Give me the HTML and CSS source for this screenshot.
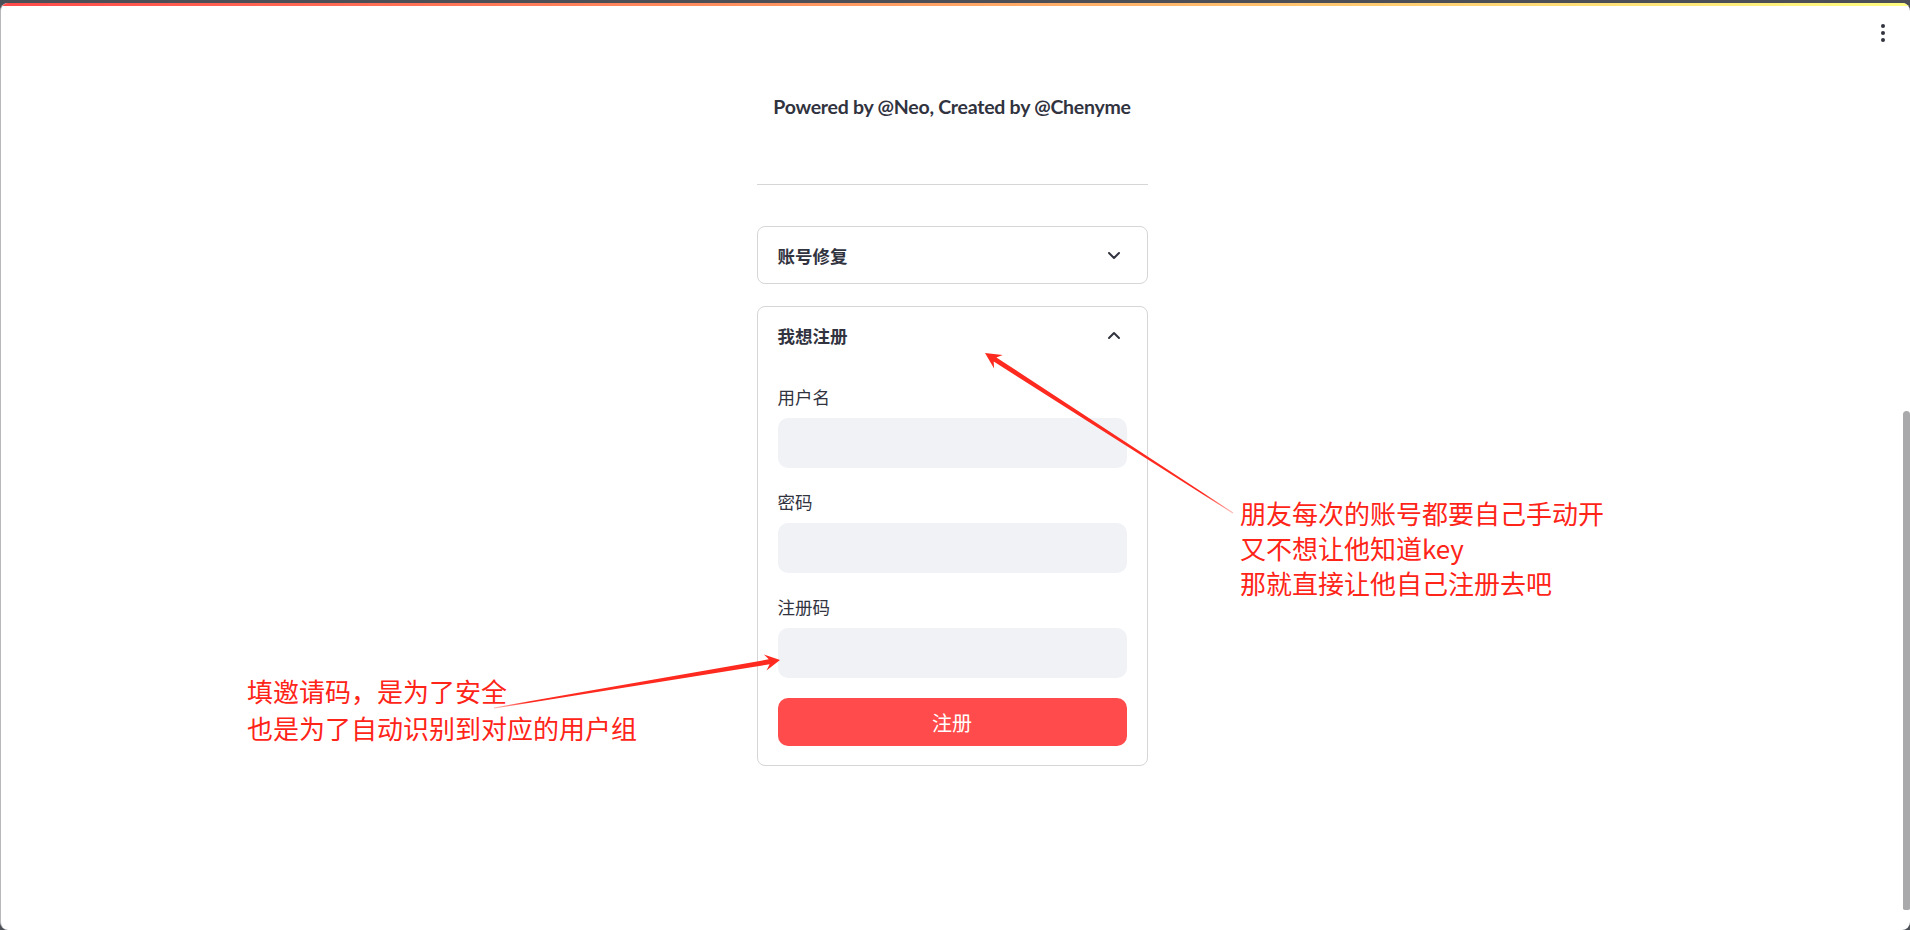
FILE: index.html
```html
<!DOCTYPE html>
<html lang="zh">
<head>
<meta charset="utf-8">
<title>Register</title>
<link rel="stylesheet" href="styles.css">
</head>
<body>
<div class="window">
  <div class="decoration"></div>
  <div class="frame">
    <div class="page">
      <div class="topbar">
        <svg class="kebab" width="4" height="18" viewBox="0 0 4 18"><circle cx="2" cy="2" r="2"/><circle cx="2" cy="9" r="2"/><circle cx="2" cy="16" r="2"/></svg>
      </div>
      <main class="column">
        <p class="powered">Powered by @Neo, Created by @Chenyme</p>
        <hr class="divider">
        <section class="expander">
          <div class="exp-header">
            <span class="exp-title">账号修复</span>
            <svg class="chev" width="14" height="9" viewBox="0 0 14 9"><path d="M2 2 L7 7 L12 2" fill="none" stroke="#31333f" stroke-width="2" stroke-linecap="round" stroke-linejoin="round"/></svg>
          </div>
        </section>
        <section class="expander open">
          <div class="exp-header">
            <span class="exp-title">我想注册</span>
            <svg class="chev" width="14" height="9" viewBox="0 0 14 9"><path d="M2 7 L7 2 L12 7" fill="none" stroke="#31333f" stroke-width="2" stroke-linecap="round" stroke-linejoin="round"/></svg>
          </div>
          <div class="exp-body">
            <label class="field">
              <span class="label">用户名</span>
              <span class="input"></span>
            </label>
            <label class="field">
              <span class="label">密码</span>
              <span class="input"></span>
            </label>
            <label class="field">
              <span class="label">注册码</span>
              <span class="input"></span>
            </label>
            <button class="btn" type="button">注册</button>
          </div>
        </section>
      </main>
    </div>
    <div class="track"><div class="thumb"></div></div>
  </div>

  <div class="note note-right">朋友每次的账号都要自己手动开<br>又不想让他知道key<br>那就直接让他自己注册去吧</div>
  <div class="note note-left">填邀请码，是为了安全<br>也是为了自动识别到对应的用户组</div>
  <svg class="arrows" width="1910" height="930" viewBox="0 0 1910 930">
    <defs>
      <linearGradient id="g1" x1="1233" y1="513" x2="985" y2="353" gradientUnits="userSpaceOnUse">
        <stop offset="0" stop-color="#ff3b30" stop-opacity="0.35"/>
        <stop offset="0.12" stop-color="#ff2a1f"/>
        <stop offset="1" stop-color="#ff2a1f"/>
      </linearGradient>
      <linearGradient id="g2" x1="494" y1="708" x2="780" y2="660" gradientUnits="userSpaceOnUse">
        <stop offset="0" stop-color="#ff3b30" stop-opacity="0.35"/>
        <stop offset="0.12" stop-color="#ff2a1f"/>
        <stop offset="1" stop-color="#ff2a1f"/>
      </linearGradient>
    </defs>
    <polygon fill="url(#g1)" points="1233.3,512.6 996.4,357.4 1002.7,355.0 985,353 994.1,368.4 993.7,361.6 1232.7,513.4"/>
    <polygon fill="url(#g2)" points="493.9,707.5 768.8,659.3 763.9,654.6 780,660 766.5,670.4 769.6,664.3 494.1,708.5"/>
  </svg>
</div>
</body>
</html>
```

FILE: styles.css
```css
html, body {
  margin: 0;
  padding: 0;
  background: #4c4f55;
  width: 1910px;
  height: 930px;
  overflow: hidden;
}

.window {
  position: relative;
  margin-top: 3px;
  height: 927px;
  background: #ffffff;
  border-radius: 8px;
  overflow: hidden;
  display: flex;
  flex-direction: column;
  border-left: 1px solid #b8b8bb;
  box-sizing: border-box;
  font-family: "Lato", "Noto Sans CJK SC", sans-serif;
  color: #31333f;
}

.decoration {
  height: 3px;
  flex: none;
  background: linear-gradient(90deg, #ff4b4b, #fffd80);
}

.frame {
  flex: 1;
  display: flex;
}

.page {
  flex: 1;
  display: flex;
  flex-direction: column;
}

.topbar {
  height: 54px;
  display: flex;
  align-items: center;
  justify-content: flex-end;
  padding-right: 18px;
}

.kebab { fill: #31333f; }

.track {
  width: 7px;
  flex: none;
  display: flex;
  flex-direction: column;
}

.thumb {
  margin-top: 405px;
  height: 499px;
  background: #a9a9ab;
  border-radius: 4px 4px 2px 2px;
}

.column {
  width: 391px;
  margin: 0 auto;
  padding-top: 31px;
}

.powered {
  margin: 0;
  text-align: center;
  font-size: 19.5px;
  line-height: 32px;
  font-weight: 700;
  letter-spacing: -0.25px;
}

.divider {
  margin: 61px 0 41px;
  border: none;
  height: 1px;
  background: #d6d6d9;
}

.expander {
  border: 1px solid #d6d6d9;
  border-radius: 8px;
  margin-bottom: 22px;
}

.exp-header {
  height: 56px;
  display: flex;
  align-items: center;
  justify-content: space-between;
  padding: 0 26px 0 20px;
}

.exp-title {
  font-family: "Noto Sans CJK SC", sans-serif;
  font-weight: 700;
  font-size: 17.5px;
}

.exp-body {
  padding: 20px 20px 19px 20px;
  display: flex;
  flex-direction: column;
}

.field {
  display: flex;
  flex-direction: column;
  margin-bottom: 20px;
}

.label {
  font-family: "Noto Sans CJK SC", sans-serif;
  font-size: 17.5px;
  line-height: 28px;
  margin-bottom: 7px;
}

.input {
  height: 50px;
  background: #f0f2f6;
  border-radius: 10px;
}

.btn {
  height: 48px;
  border: none;
  border-radius: 10px;
  background: #ff4b4b;
  color: #ffffff;
  font-family: "Noto Sans CJK SC", sans-serif;
  font-size: 20px;
  padding: 0;
}

.note {
  position: absolute;
  font-family: "Noto Sans CJK SC", "Microsoft YaHei", sans-serif;
  font-size: 26px;
  color: #ff2418;
  white-space: nowrap;
  letter-spacing: 0;
}

.note-right {
  left: 1239px;
  top: 492px;
  line-height: 35px;
}

.note-left {
  left: 246px;
  top: 669px;
  line-height: 37px;
}

.arrows {
  position: absolute;
  left: -1px;
  top: -3px;
  pointer-events: none;
}
```
